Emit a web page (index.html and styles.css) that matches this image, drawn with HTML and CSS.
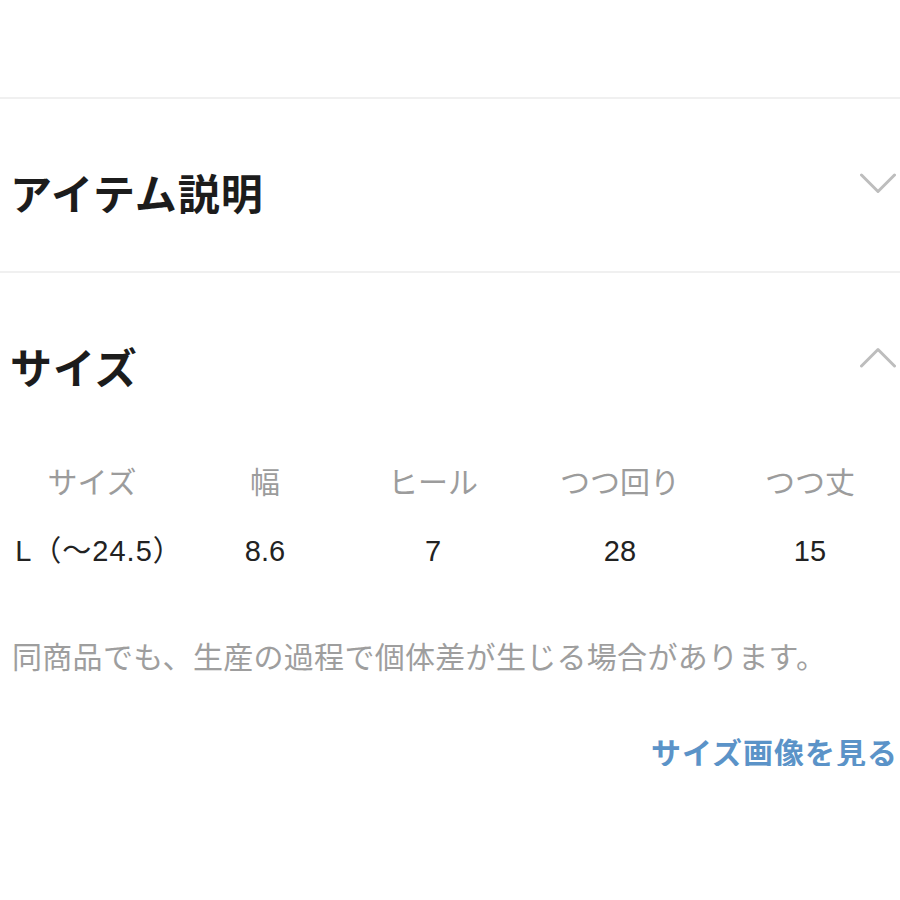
FILE: index.html
```html
<!DOCTYPE html>
<html lang="ja">
<head>
<meta charset="utf-8">
<link rel="stylesheet" href="styles.css">
</head>
<body>
<div class="page">
  <div class="top-space"></div>
  <section class="acc">
    <div class="acc-head">
      <h2 class="acc-title">アイテム説明</h2>
      <svg class="chev" width="36" height="21" viewBox="0 0 36 21"><polyline points="1.5,2 18,18.5 34.5,2" fill="none" stroke="#bdbdbd" stroke-width="3" stroke-linecap="round" stroke-linejoin="round"/></svg>
    </div>
  </section>
  <section class="acc open">
    <div class="acc-head">
      <h2 class="acc-title">サイズ</h2>
      <svg class="chev" width="36" height="21" viewBox="0 0 36 21"><polyline points="1.5,19 18,2.5 34.5,19" fill="none" stroke="#bdbdbd" stroke-width="3" stroke-linecap="round" stroke-linejoin="round"/></svg>
    </div>
    <div class="size-table">
      <div class="th">サイズ</div>
      <div class="th">幅</div>
      <div class="th">ヒール</div>
      <div class="th">つつ回り</div>
      <div class="th">つつ丈</div>
      <div class="td first">L（〜24.5）</div>
      <div class="td">8.6</div>
      <div class="td">7</div>
      <div class="td">28</div>
      <div class="td">15</div>
    </div>
    <p class="note">同商品でも、生産の過程で個体差が生じる場合があります。</p>
    <div class="link-row"><a class="link">サイズ画像を見る</a></div>
  </section>
</div>
</body>
</html>
```
FILE: styles.css
```css
html, body {
  margin: 0;
  padding: 0;
  background: #ffffff;
}
body {
  font-family: "Noto Sans CJK JP", "Noto Sans", sans-serif;
  color: #1e1e1e;
}
.page {
  width: 900px;
}
.top-space {
  height: 97px;
  border-bottom: 2px solid #f0f0f0;
}
.acc {
  border-bottom: 2px solid #f0f0f0;
}
.acc.open {
  border-bottom: none;
}
.acc-head {
  display: flex;
  justify-content: space-between;
  align-items: flex-start;
  padding: 72px 4px 58px 10px;
}
.acc-title {
  margin: 0;
  font-size: 42px;
  line-height: 42px;
  font-weight: 700;
  color: #1c1c1c;
  letter-spacing: 1px;
}
.chev {
  display: block;
  margin-top: 2px;
}
.size-table {
  display: grid;
  grid-template-columns: 184px 162px 174px 200px 180px;
}
.th, .td {
  text-align: center;
  font-size: 30px;
  line-height: 30px;
}
.th {
  color: #9c9c9c;
  padding: 20px 0 26px;
}
.td {
  font-family: "Liberation Sans", "Noto Sans CJK JP", sans-serif;
  color: #222222;
  padding: 15px 0 0;
  font-size: 29px;
}
.td.first {
  letter-spacing: 1px;
  padding-left: 14px;
}
.note {
  margin: 0;
  padding: 74px 0 0 12px;
  font-size: 30px;
  line-height: 30px;
  color: #9e9e9e;
  letter-spacing: 0.3px;
}
.link-row {
  display: flex;
  justify-content: flex-end;
  padding: 66px 2px 0 0;
}
.link {
  font-size: 30px;
  line-height: 30px;
  font-weight: 700;
  color: #5b93c8;
  letter-spacing: 1px;
}
```
